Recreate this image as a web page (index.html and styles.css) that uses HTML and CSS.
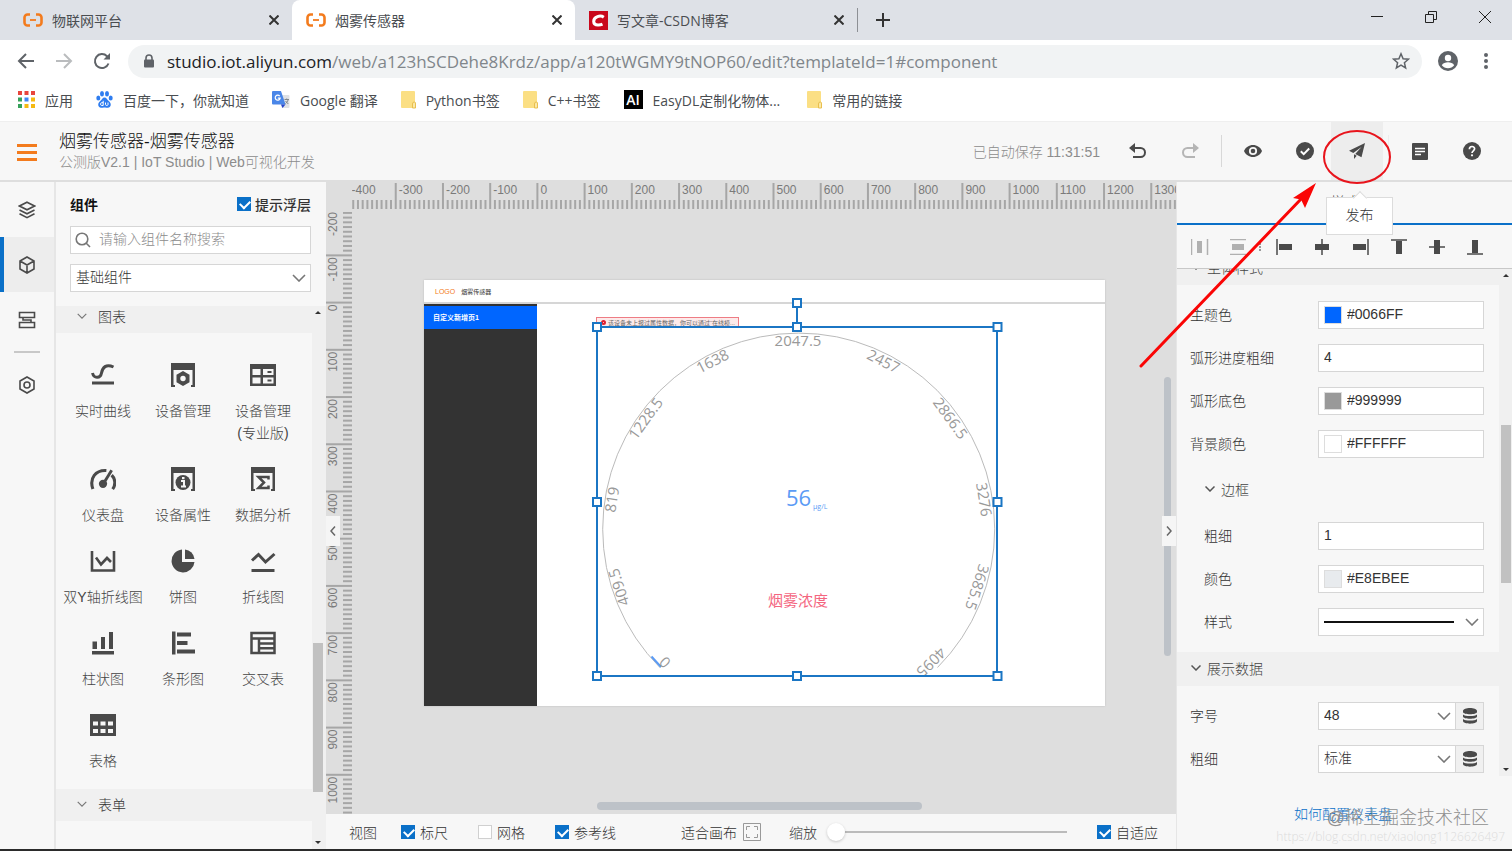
FILE: index.html
```
<!DOCTYPE html>
<html lang="zh-CN">
<head>
    <meta charset="UTF-8">
    <meta name="viewport" content="width=device-width, initial-scale=1.0">
    <title>烟雾传感器</title>
    <link rel="stylesheet" href="styles.css">
</head>
<body>
    <!-- Browser tabs -->
    <div class="tab-bar">
        <div class="tab">
            <svg class="favicon" viewBox="0 0 20 14"><path d="M7 1.5H4.5a3 3 0 0 0-3 3v5a3 3 0 0 0 3 3H7M13 1.5h2.5a3 3 0 0 1 3 3v5a3 3 0 0 1-3 3H13" fill="none" stroke="#f37b1d" stroke-width="2.6"/><path d="M7 7h6" stroke="#f37b1d" stroke-width="1.8"/></svg>
            <span>物联网平台</span>
            <button class="tab-close" aria-label="关闭"><svg viewBox="0 0 10 10"><path d="M.5.5l9 9M9.5.5l-9 9"/></svg></button>
        </div>
        <div class="tab active">
            <svg class="favicon" viewBox="0 0 20 14"><path d="M7 1.5H4.5a3 3 0 0 0-3 3v5a3 3 0 0 0 3 3H7M13 1.5h2.5a3 3 0 0 1 3 3v5a3 3 0 0 1-3 3H13" fill="none" stroke="#f37b1d" stroke-width="2.6"/><path d="M7 7h6" stroke="#f37b1d" stroke-width="1.8"/></svg>
            <span>烟雾传感器</span>
            <button class="tab-close" aria-label="关闭"><svg viewBox="0 0 10 10"><path d="M.5.5l9 9M9.5.5l-9 9"/></svg></button>
        </div>
        <div class="tab csdn">
            <svg class="favicon square" viewBox="0 0 19 19"><rect width="19" height="19" fill="#c9081c"/><path d="M14.8 6.2C13 5 10.500 4.900 8.500 5.600 6 6.500 4.600 8.400 4.700 10.600c.1 2.300 2 3.400 4.600 3.300 1.700 0 3.100-.3 4.200-.8" fill="none" stroke="#fff" stroke-width="3"/></svg>
            <span>写文章-CSDN博客</span>
            <button class="tab-close" aria-label="关闭"><svg viewBox="0 0 10 10"><path d="M.5.5l9 9M9.5.5l-9 9"/></svg></button>
        </div>
        <button class="new-tab" aria-label="新标签页"><svg viewBox="0 0 14 14"><path d="M7 0v14M0 7h14"/></svg></button>
        <div class="window-buttons">
            <button aria-label="最小化"><svg viewBox="0 0 14 14"><path d="M1 6.500h12"/></svg></button>
            <button aria-label="还原"><svg viewBox="0 0 14 14"><path d="M1.500 4.500h8v8h-8zM4.500 4.500v-3h8v8h-3"/></svg></button>
            <button aria-label="关闭"><svg viewBox="0 0 14 14"><path d="M1 1l12 12M13 1L1 13"/></svg></button>
        </div>
    </div>

    <!-- Address bar -->
    <div class="nav-bar">
        <button class="nav-btn" aria-label="后退"><svg viewBox="0 0 18 18"><path d="M17 9H2M9 2L2 9l7 7"/></svg></button>
        <button class="nav-btn disabled" aria-label="前进"><svg viewBox="0 0 18 18"><path d="M1 9h15M9 2l7 7-7 7"/></svg></button>
        <button class="nav-btn" aria-label="刷新"><svg viewBox="0 0 18 18"><path d="M15.500 11.500A7 7 0 1 1 14 4.200l2 2"/><path d="M17 1v6.500h-6.500z" fill="#5f6368" stroke="none"/></svg></button>
        <div class="address">
            <svg class="lock" viewBox="0 0 12 14"><path d="M3 6V4a3 3 0 0 1 6 0v2" fill="none" stroke="#5f6368" stroke-width="1.600"/><rect x="1" y="5.500" width="10" height="8" rx="1" fill="#5f6368"/></svg>
            <span class="url"><b>studio.iot.aliyun.com</b>/web/a123hSCDehe8Krdz/app/a120tWGMY9tNOP60/edit?templateId=1#component</span>
            <svg class="star" viewBox="0 0 18 18"><path d="M9 1.800l2.100 4.900 5.300.5-4 3.500 1.200 5.200L9 13.100l-4.600 2.800 1.200-5.200-4-3.500 5.300-.5z" fill="none" stroke="#5f6368" stroke-width="1.500"/></svg>
        </div>
        <svg class="avatar" viewBox="0 0 20 20"><circle cx="10" cy="10" r="10" fill="#5f6368"/><circle cx="10" cy="7" r="3.200" fill="#fff"/><path d="M3.800 14.200c1.200-2 3.700-2.900 6.200-2.900s5 .9 6.200 2.900c-1.500 2-3.700 3-6.200 3s-4.700-1-6.200-3z" fill="#fff"/></svg>
        <svg class="more" viewBox="0 0 4 16"><circle cx="2" cy="2" r="2"/><circle cx="2" cy="8" r="2"/><circle cx="2" cy="14" r="2"/></svg>
    </div>

    <!-- Bookmarks -->
    <div class="bookmarks">
        <a class="bookmark" href="#"><svg width="17" height="17" viewBox="0 0 17 17"><path d="M0 0h4v4H0zM6.500 0h4v4h-4zM13 0h4v4h-4z" fill="#e8453c"/><path d="M0 6.500h4v4H0z" fill="#36a15a"/><path d="M6.500 6.500h4v4h-4z" fill="#3f86f5"/><path d="M13 6.500h4v4h-4zM6.500 13h4v4h-4zM13 13h4v4h-4z" fill="#f5b912"/><path d="M0 13h4v4H0z" fill="#36a15a"/></svg>应用</a>
        <a class="bookmark" href="#"><svg width="17" height="17" viewBox="0 0 17 17" fill="#2f7df0"><ellipse cx="2.300" cy="7" rx="2" ry="2.600"/><ellipse cx="6" cy="2.800" rx="2" ry="2.700"/><ellipse cx="11" cy="2.800" rx="2" ry="2.700"/><ellipse cx="14.700" cy="7" rx="2" ry="2.600"/><path d="M8.500 6.500c2 0 2.500 2 4.500 3.700 3 2.500 1.800 6.300-1 6.600-1.500.2-2-.3-3.500-.3s-2 .5-3.500.3c-2.800-.3-4-4.100-1-6.600 2-1.700 2.500-3.700 4.500-3.700z"/><path d="M7.200 9.800v4.700H5.600c-1.400 0-1.400-2.800 0-2.800h1.600M9.500 11.500v2.200c0 1 2.500 1 2.500 0v-2.200" fill="none" stroke="#fff"/></svg>百度一下，你就知道</a>
        <a class="bookmark" href="#"><svg width="18" height="18" viewBox="0 0 18 18"><path d="M7 4h9.500q1 0 1 1v11q0 1-1 1H10z" fill="#dfe1e5"/><path d="M1 0h8l4.500 13.500H1q-1 0-1-1V1q0-1 1-1z" fill="#4a86e8"/><path d="M9 13.500h4.500L10.500 17z" fill="#2645c9"/><path d="M7.700 5.100a2.500 2.500 0 1 0 .5 2H5.800" fill="none" stroke="#fff" stroke-width="1.200"/><path d="M12.500 8.500H17M14.700 7.500v1M16.200 8.500c-.5 2-1.700 3.200-2.700 4M13.500 10l2.800 3" fill="none" stroke="#80868b"/></svg>Google 翻译</a>
        <a class="bookmark" href="#"><svg width="15" height="18" viewBox="0 0 15 18"><path d="M1 0h12q1 0 1 1v16H1q-1 0-1-1V1q0-1 1-1z" fill="#fbdf84"/><path d="M11.500 17v-4q0-2 1.700-2t1.300 2v4z" fill="#fbe9a9" stroke="#e9bf4e"/></svg>Python书签</a>
        <a class="bookmark" href="#"><svg width="15" height="18" viewBox="0 0 15 18"><path d="M1 0h12q1 0 1 1v16H1q-1 0-1-1V1q0-1 1-1z" fill="#fbdf84"/><path d="M11.500 17v-4q0-2 1.700-2t1.300 2v4z" fill="#fbe9a9" stroke="#e9bf4e"/></svg>C++书签</a>
        <a class="bookmark" href="#"><span class="ai-icon">AI</span>EasyDL定制化物体...</a>
        <a class="bookmark last" href="#"><svg width="15" height="18" viewBox="0 0 15 18"><path d="M1 0h12q1 0 1 1v16H1q-1 0-1-1V1q0-1 1-1z" fill="#fbdf84"/><path d="M11.500 17v-4q0-2 1.700-2t1.300 2v4z" fill="#fbe9a9" stroke="#e9bf4e"/></svg>常用的链接</a>
    </div>

    <!-- App header -->
    <header class="app-header">
        <button class="menu-btn" aria-label="菜单"><i></i><i></i><i></i></button>
        <div class="app-title">
            <h1>烟雾传感器-烟雾传感器</h1>
            <p>公测版V2.1 | IoT Studio | Web可视化开发</p>
        </div>
        <span class="saved">已自动保存 11:31:51</span>
        <div class="actions">
            <button aria-label="撤销"><svg width="18" height="16" viewBox="0 0 18 16"><path d="M3 5h8.500a4.500 4.500 0 0 1 0 9H4" fill="none" stroke="#4a4a4a" stroke-width="2"/><path d="M6 0v10L0 5z" fill="#4a4a4a"/></svg></button>
            <button aria-label="重做"><svg width="18" height="16" viewBox="0 0 18 16"><path d="M15 5H6.500a4.500 4.500 0 0 0 0 9H14" fill="none" stroke="#b5b5b5" stroke-width="2"/><path d="M12 0v10l6-5z" fill="#b5b5b5"/></svg></button>
            <span class="divider"></span>
            <button aria-label="预览"><svg width="18" height="12" viewBox="0 0 18 12"><path d="M9 0c4 0 7.500 2.500 9 6-1.500 3.500-5 6-9 6s-7.500-2.500-9-6c1.500-3.500 5-6 9-6z" fill="#4a4a4a"/><circle cx="9" cy="6" r="3.200" fill="#4a4a4a" stroke="#f7f7f7" stroke-width="1.800"/></svg></button>
            <button aria-label="检查"><svg width="18" height="18" viewBox="0 0 18 18"><circle cx="9" cy="9" r="9" fill="#4a4a4a"/><path d="M4.800 9.200l2.900 2.900 5.500-5.600" fill="none" stroke="#fff" stroke-width="2"/></svg></button>
            <button class="publish" aria-label="发布"><svg width="16" height="16" viewBox="0 0 16 16"><path d="M16 0L0 7.800l4.300 2.300L12.500 4 6.200 11l6.300 3.200zM5 11.300V16l2.700-3.300z" fill="#4a4a4a"/></svg></button>
            <span class="divider light"></span>
            <button aria-label="文档"><svg width="16" height="17" viewBox="0 0 16 17"><rect width="16" height="17" rx="1" fill="#4a4a4a"/><path d="M3 5.500h10M3 8.500h10M3 11.500h6" stroke="#fff" stroke-width="1.400"/></svg></button>
            <button aria-label="帮助"><svg width="18" height="18" viewBox="0 0 18 18"><circle cx="9" cy="9" r="9" fill="#4a4a4a"/><path d="M6.400 7.200c0-3.500 5.200-3.500 5.200-.4C11.600 8.800 9 8.800 9 11" fill="none" stroke="#fff" stroke-width="1.700"/><circle cx="9" cy="13.300" r="1.100" fill="#fff"/></svg></button>
        </div>
    </header>

    <main class="workspace">
        <!-- Icon rail -->
        <nav class="rail">
            <button aria-label="图层"><svg viewBox="0 0 18 18"><path d="M9 1.200l7.500 3.800L9 8.800 1.500 5z"/><path d="M1.500 9L9 12.800 16.500 9M1.500 12.800L9 16.600l7.500-3.800"/></svg></button>
            <button class="active" aria-label="组件"><svg viewBox="0 0 18 18"><path d="M9 1l7 4v8l-7 4-7-4V5zM2 5l7 4 7-4M9 9v8"/></svg></button>
            <button aria-label="页面"><svg viewBox="0 0 18 18"><path d="M1.500 1.500h15v5h-15zM1.500 11.500h15v5h-15zM5 6.500V9h8v2.500"/></svg></button>
            <hr>
            <button aria-label="设置"><svg viewBox="0 0 18 18"><path d="M9 1l7 4v8l-7 4-7-4V5z"/><circle cx="9" cy="9" r="3"/></svg></button>
        </nav>

        <!-- Component library -->
        <aside class="library">
            <div class="library-head">
                <h2>组件</h2>
                <label class="check bold"><input type="checkbox" checked>提示浮层</label>
            </div>
            <div class="search">
                <svg viewBox="0 0 16 16"><circle cx="7" cy="7" r="5.800"/><path d="M11 11l4 4"/></svg>
                <input type="text" placeholder="请输入组件名称搜索" aria-label="搜索组件">
            </div>
            <div class="select library-select">
                <select aria-label="组件分类"><option>基础组件</option></select>
                <svg viewBox="0 0 14 8"><path d="M1 1l6 6 6-6"/></svg>
            </div>
            <div class="library-body">
                <div class="library-list">
                    <h3 class="group"><svg viewBox="0 0 14 8"><path d="M1 1l6 6 6-6"/></svg>图表</h3>
                    <div class="components">
                        <div class="component"><svg viewBox="0 0 26 26"><path d="M2.500 11c1.500 6 8 5.500 9 0S16 1.500 23.500 5" fill="none" stroke="#4a4a4a" stroke-width="3"/><path d="M2 19.500h22v3H2z"/></svg>实时曲线</div>
                        <div class="component"><svg viewBox="0 0 26 26"><path d="M1 1h24v24h-4v-2h1.500V8h-19v15H5v2H1z"/><path d="M13 9l6.500 3.700v7.600L13 24l-6.500-3.700v-7.600z"/><circle cx="13" cy="16.500" r="2.700" fill="#f7f7f7"/></svg>设备管理</div>
                        <div class="component"><svg viewBox="0 0 26 26"><path d="M0 2h26v22H0z"/><path d="M2.500 7h8v6h-8zM2.500 15.500h8v6h-8zM13 7h10.500v6H13zM13 15.500h10.500v6H13z" fill="#f7f7f7"/><path d="M17.500 9h4v2h-4zM17.500 17.500h4v2h-4z"/></svg>设备管理<br>(专业版)</div>
                        <div class="component"><svg viewBox="0 0 27 26"><path d="M3 23.500C-1 12 6 3.500 17 4.200M22.500 9a11 11 0 0 1 1 14.500" fill="none" stroke="#4a4a4a" stroke-width="3.200"/><circle cx="13.500" cy="18" r="4.300"/><path d="M14.500 17L22.500 4" stroke="#4a4a4a" stroke-width="3"/></svg>仪表盘</div>
                        <div class="component"><svg viewBox="0 0 26 26"><path d="M1 1h24v24h-4v-2h1.500V7h-19v16H5v2H1z"/><circle cx="13" cy="16.500" r="7.500"/><path d="M11 15h3v5.500M11 20.500h5" fill="none" stroke="#f7f7f7" stroke-width="2"/><path d="M12 11h2.500v2.200H12z" fill="#f7f7f7"/></svg>设备属性</div>
                        <div class="component"><svg viewBox="0 0 26 26"><path d="M1 1h24v24h-4v-2h1.500V7h-19v16H5v2H1z"/><path d="M18.500 13.500V11H8.500l5.500 5.500L8.500 22h10v-2.500" fill="none" stroke="#4a4a4a" stroke-width="2.500"/></svg>数据分析</div>
                        <div class="component"><svg viewBox="0 0 26 26"><path d="M2 3v19.500h22V3M6 9.500l5 7 6-6.500 4 4" fill="none" stroke="#4a4a4a" stroke-width="2.600"/></svg>双Y轴折线图</div>
                        <div class="component"><svg viewBox="0 0 26 26"><path d="M12 1.500A11.500 11.500 0 1 0 24.500 14H12z"/><path d="M15 1.500A10.500 10.500 0 0 1 24.500 11H15z"/></svg>饼图</div>
                        <div class="component"><svg viewBox="0 0 26 26"><path d="M2 12.500l6.500-6 7 7.500 9-8" fill="none" stroke="#4a4a4a" stroke-width="3"/><path d="M1.500 21h23v3h-23z"/></svg>折线图</div>
                        <div class="component"><svg viewBox="0 0 26 26"><path d="M2 21h22v3.500H2zM2.500 11.500H7V19H2.500zM11 7h4v12h-4zM19 2h4v17h-4z"/></svg>柱状图</div>
                        <div class="component"><svg viewBox="0 0 26 26"><path d="M2 1.500h3.500v23H2zM7 2.500h14v4H7zM7 11h10.500v4H7zM7 19.500h18v4H7z"/></svg>条形图</div>
                        <div class="component"><svg viewBox="0 0 26 26"><path d="M1.500 3h23v20h-23zM1.500 8.500h23M9 8.500V23M9 13.500h15.500M9 18.300h15.500" fill="none" stroke="#4a4a4a" stroke-width="2.500"/></svg>交叉表</div>
                        <div class="component"><svg viewBox="0 0 26 26"><path d="M0 2h26v22H0z"/><path d="M3 9.500h5v4H3zM10.500 9.500h5v4h-5zM18 9.500h5v4h-5zM3 17h5v4H3zM10.500 17h5v4h-5zM18 17h5v4h-5z" fill="#f7f7f7"/></svg>表格</div>
                    </div>
                    <h3 class="group"><svg viewBox="0 0 14 8"><path d="M1 1l6 6 6-6"/></svg>表单</h3>
                </div>
                <div class="scrollbar library-scroll"><i class="up"></i><b></b><i class="down"></i></div>
            </div>
        </aside>

        <!-- Editing area -->
        <section class="editor">
            <div class="canvas">
                <svg class="ruler-x" id="rulerX"></svg>
                <svg class="ruler-y" id="rulerY"></svg>
                <div class="page">
                    <div class="page-head"><b>LOGO</b>烟雾传感器</div>
                    <div class="page-body">
                        <div class="page-side"><div class="page-item">自定义新增页1</div></div>
                    </div>
                </div>
                <div class="error-tip"><i></i>该设备未上报过属性数据，你可以通过“在线模...</div>
                <div class="selection">
                    <svg class="gauge" viewBox="0 0 402 350">
                        <path d="M64.200 340.800A196 196 0 1 1 341.500 340.500" fill="none" stroke="#bbb"/>
                        <path d="M55.500 329.500L65 340" stroke="#5b9bf5" stroke-width="2"/>
                        <g class="gauge-labels">
                            <text transform="rotate(-135 202 202)" x="202" y="19">0</text>
                            <text transform="rotate(-108 202 202)" x="202" y="19">409.5</text>
                            <text transform="rotate(-81 202 202)" x="202" y="19">819</text>
                            <text transform="rotate(-54 202 202)" x="202" y="19">1228.5</text>
                            <text transform="rotate(-27 202 202)" x="202" y="19">1638</text>
                            <text x="202" y="19">2047.5</text>
                            <text transform="rotate(27 202 202)" x="202" y="19">2457</text>
                            <text transform="rotate(54 202 202)" x="202" y="19">2866.5</text>
                            <text transform="rotate(81 202 202)" x="202" y="19">3276</text>
                            <text transform="rotate(108 202 202)" x="202" y="19">3685.5</text>
                            <text transform="rotate(135 202 202)" x="202" y="19">4095</text>
                        </g>
                        <text class="gauge-value" x="190" y="179">56</text>
                        <text class="gauge-unit" x="217" y="182">μg/L</text>
                        <text class="gauge-name" x="202" y="279">烟雾浓度</text>
                    </svg>
                    <svg class="handles" viewBox="-6 -30 414 386">
                        <path d="M1 0h400v349H1zM201 0v-24" fill="none"/>
                        <path d="M-3-4h8v8h-8zM197-4h8v8h-8zM397.500-4h8v8h-8zM-3 171h8v8h-8zM397.500 171h8v8h-8zM-3 345h8v8h-8zM197 345h8v8h-8zM397.500 345h8v8h-8zM197-28h8v8h-8z" fill="#fff"/>
                    </svg>
                </div>
                <i class="canvas-scroll horizontal"></i>
                <i class="canvas-scroll vertical"></i>
                <button class="collapse left" aria-label="收起左侧"><svg viewBox="0 0 6 10"><path d="M5 .5L1 5l4 4.500"/></svg></button>
                <button class="collapse right" aria-label="收起右侧"><svg viewBox="0 0 6 10"><path d="M1 .5L5 5 1 9.500"/></svg></button>
            </div>
            <div class="view-bar">
                <span>视图</span>
                <label class="check"><input type="checkbox" checked>标尺</label>
                <label class="check"><input type="checkbox">网格</label>
                <label class="check"><input type="checkbox" checked>参考线</label>
                <button class="fit">适合画布<svg viewBox="0 0 18 18"><path d="M.5.500h17v17H.500z"/><path d="M3.500 7V3.500H7M11 3.500h3.500V7M14.500 11v3.500H11M7 14.500H3.500V11"/></svg></button>
                <label class="zoom">缩放<input type="range" min="0" max="100" value="0"></label>
                <label class="check adaptive"><input type="checkbox" checked>自适应</label>
            </div>
        </section>

        <!-- Properties -->
        <aside class="props">
            <div class="props-tab">样式</div>
            <div class="align-bar">
                <button class="dim" aria-label="水平分布"><svg viewBox="0 0 18 16"><path d="M.5 0v16M16.500 0v16"/><path d="M6 2h5v12H6z" fill="currentColor" stroke="none"/></svg></button>
                <button class="dim" aria-label="垂直分布"><svg viewBox="0 0 18 16"><path d="M1 .5h16M1 15.500h16"/><path d="M3 5h12v6H3z" fill="currentColor" stroke="none"/></svg></button>
                <button class="first" aria-label="左对齐"><svg viewBox="0 0 18 16"><path d="M2 0v16"/><path d="M4 5h13v6H4z" fill="currentColor" stroke="none"/></svg></button>
                <button aria-label="水平居中"><svg viewBox="0 0 18 16"><path d="M9 0v16"/><path d="M2 5h14v6H2z" fill="currentColor" stroke="none"/></svg></button>
                <button aria-label="右对齐"><svg viewBox="0 0 18 16"><path d="M16 0v16"/><path d="M1 5h13v6H1z" fill="currentColor" stroke="none"/></svg></button>
                <button aria-label="顶对齐"><svg viewBox="0 0 18 16"><path d="M1 1h16"/><path d="M6 2h6v13H6z" fill="currentColor" stroke="none"/></svg></button>
                <button aria-label="垂直居中"><svg viewBox="0 0 18 16"><path d="M1 8h16"/><path d="M6 1h6v14H6z" fill="currentColor" stroke="none"/></svg></button>
                <button aria-label="底对齐"><svg viewBox="0 0 18 16"><path d="M1 15h16"/><path d="M6 1h6v13H6z" fill="currentColor" stroke="none"/></svg></button>
            </div>
            <div class="props-body">
                <div class="props-list">
                    <h3 class="section"><svg viewBox="0 0 10 6"><path d="M.5.500L5 5 9.500.500"/></svg>主体样式</h3>
                    <div class="rows">
                        <div class="row"><label for="theme">主题色</label><div class="field"><input type="color" value="#0066ff" aria-label="主题色取色"><input type="text" id="theme" value="#0066FF"></div></div>
                        <div class="row"><label for="arcWidth">弧形进度粗细</label><div class="field"><input type="text" id="arcWidth" value="4"></div></div>
                        <div class="row"><label for="arcColor">弧形底色</label><div class="field"><input type="color" value="#999999" aria-label="弧形底色取色"><input type="text" id="arcColor" value="#999999"></div></div>
                        <div class="row"><label for="bgColor">背景颜色</label><div class="field"><input type="color" value="#ffffff" aria-label="背景颜色取色"><input type="text" id="bgColor" value="#FFFFFF"></div></div>
                        <h4 class="sub-section"><svg viewBox="0 0 10 6"><path d="M.5.500L5 5 9.500.500"/></svg>边框</h4>
                        <div class="row sub"><label for="borderWidth">粗细</label><div class="field"><input type="text" id="borderWidth" value="1"></div></div>
                        <div class="row sub"><label for="borderColor">颜色</label><div class="field"><input type="color" value="#e8ebee" aria-label="边框取色"><input type="text" id="borderColor" value="#E8EBEE"></div></div>
                        <div class="row sub"><label for="borderStyle">样式</label><div class="select line"><select id="borderStyle"><option label=" " value="solid"></option></select><svg viewBox="0 0 14 8"><path d="M1 1l6 6 6-6"/></svg></div></div>
                    </div>
                    <h3 class="section"><svg viewBox="0 0 10 6"><path d="M.5.500L5 5 9.500.500"/></svg>展示数据</h3>
                    <div class="rows">
                        <div class="row"><label for="fontSize">字号</label><div class="bound"><div class="select"><select id="fontSize"><option>48</option></select><svg viewBox="0 0 14 8"><path d="M1 1l6 6 6-6"/></svg></div><button aria-label="数据源"><svg viewBox="0 0 14 16"><path d="M0 3c0-4 14-4 14 0v1c0 3-14 3-14 0zM0 6.500c2 2 12 2 14 0v2c0 3-14 3-14 0zM0 11c2 2 12 2 14 0v2c0 3.500-14 3.500-14 0z"/></svg></button></div></div>
                        <div class="row"><label for="fontWeight">粗细</label><div class="bound"><div class="select"><select id="fontWeight"><option>标准</option></select><svg viewBox="0 0 14 8"><path d="M1 1l6 6 6-6"/></svg></div><button aria-label="数据源"><svg viewBox="0 0 14 16"><path d="M0 3c0-4 14-4 14 0v1c0 3-14 3-14 0zM0 6.500c2 2 12 2 14 0v2c0 3-14 3-14 0zM0 11c2 2 12 2 14 0v2c0 3.500-14 3.500-14 0z"/></svg></button></div></div>
                    </div>
                </div>
                <div class="scrollbar props-scroll"><i class="up"></i><b></b><i class="down"></i></div>
            </div>
            <div class="props-foot"><a href="#">如何配置仪表盘</a></div>
        </aside>
    </main>

    <div class="tooltip">发布</div>

    <!-- Red marker and arrow -->
    <svg class="marker" viewBox="0 0 260 250">
        <ellipse cx="225" cy="37" rx="33" ry="26" fill="none" stroke="#e8141c" stroke-width="2"/>
        <path d="M9 246L170 78" stroke="#fa0505" stroke-width="3" stroke-linecap="round"/>
        <path d="M184 63L161 78l8 1.500L173 88z" fill="#fa0505"/>
    </svg>

    <div class="watermark">@稀土掘金技术社区</div>
    <div class="watermark-url">https://blog.csdn.net/xiaolong1126626497</div>

    <script src="script.js"></script>
</body>
</html>
```

FILE: styles.css
```
* {
    box-sizing: border-box;
}

body {
    margin: 0;
    height: 100vh;
    display: flex;
    flex-direction: column;
    overflow: hidden;
    position: relative;
    background: #f7f7f7;
    border-bottom: 2px solid #2b2b2b;
    font-family: "Liberation Sans", "Noto Sans CJK SC", sans-serif;
    font-size: 14px;
    font-weight: 300;
    color: #333;
}

button {
    display: flex;
    align-items: center;
    justify-content: center;
    padding: 0;
    border: 0;
    background: none;
    font: inherit;
    color: inherit;
}

input, select {
    font: inherit;
    color: inherit;
}

h1, h2, h3, h4, p {
    margin: 0;
    font-size: 14px;
    font-weight: 300;
}

svg {
    flex: none;
}

/* Browser */
.tab-bar, .nav-bar, .bookmarks {
    display: flex;
    align-items: center;
    flex: none;
    font-family: "Open Sans", "Noto Sans CJK SC", sans-serif;
    font-weight: 400;
    color: #4a4d51;
}

.tab-bar {
    height: 40px;
    background: #dee1e7;
}

.tab {
    display: flex;
    align-items: center;
    gap: 9px;
    width: 283px;
    height: 40px;
    padding: 0 13px 0 14px;
}

.tab:first-child {
    width: 292px;
    padding-left: 23px;
}

.tab.active {
    background: #fff;
    border-radius: 8px 8px 0 0;
}

.tab.csdn {
    border-right: 1px solid #8d9095;
    height: 24px;
}

.favicon {
    width: 20px;
    height: 14px;
}

.favicon.square {
    width: 19px;
    height: 19px;
}

.tab-close {
    width: 10px;
    height: 10px;
    margin-left: auto;
}

.tab-close svg, .new-tab svg {
    width: 100%;
    height: 100%;
    stroke: #333;
    stroke-width: 2;
}

.new-tab {
    width: 14px;
    height: 14px;
    margin-left: 18px;
}

.window-buttons {
    display: flex;
    gap: 40px;
    margin: 0 20px 6px auto;
}

.window-buttons svg {
    width: 14px;
    height: 14px;
    fill: none;
    stroke: #222;
}

.nav-bar {
    height: 42px;
    padding: 0 24px 0 17px;
    background: #fff;
}

.nav-btn {
    width: 18px;
    height: 18px;
    margin-right: 20px;
}

.nav-btn svg {
    width: 18px;
    height: 18px;
    fill: none;
    stroke: #5f6368;
    stroke-width: 2;
}

.nav-btn.disabled svg {
    stroke: #babcbe;
}

.address {
    display: flex;
    align-items: center;
    flex: 1;
    height: 33px;
    margin-left: -3px;
    margin-right: 16px;
    padding: 0 12px 0 15px;
    border-radius: 17px;
    background: #f1f3f4;
    font-size: 17px;
    color: #80868b;
}

.address b {
    font-weight: 400;
    color: #202124;
}

.lock {
    width: 12px;
    height: 14px;
    margin-right: 12px;
}

.star {
    width: 18px;
    height: 18px;
    margin-left: auto;
}

.avatar {
    width: 20px;
    height: 20px;
    margin-right: 26px;
}

.more {
    width: 4px;
    height: 16px;
    fill: #5f6368;
}

.bookmarks {
    height: 39px;
    gap: 23px;
    padding: 0 18px 4px;
    background: #fff;
}

.bookmark {
    display: flex;
    align-items: center;
    gap: 10px;
    color: inherit;
    text-decoration: none;
    white-space: nowrap;
}

.bookmark.last {
    margin-left: 4px;
}

.ai-icon {
    width: 19px;
    height: 19px;
    background: #000;
    color: #fff;
    line-height: 19px;
    text-align: center;
    font-weight: 600;
}

/* App header */
.app-header {
    display: flex;
    align-items: center;
    flex: none;
    height: 61px;
    padding: 0 14px 0 17px;
    border-top: 1px solid #efefef;
    border-bottom: 2px solid #dedede;
    background: #f7f7f7;
}

.menu-btn {
    flex-direction: column;
    gap: 4px;
    width: 20px;
    margin-right: 22px;
    padding-top: 3px;
}

.menu-btn i {
    width: 20px;
    height: 3px;
    background: #f37b1d;
}

.app-title {
    padding-top: 2px;
}

.app-title h1 {
    font-size: 17px;
    line-height: 20px;
    color: #111;
}

.app-title p {
    line-height: 20px;
    color: #8c8c8c;
}

.saved {
    margin-left: auto;
    margin-right: 12px;
    color: #8c8c8c;
}

.actions {
    display: flex;
    align-items: center;
    height: 100%;
}

.actions button {
    width: 52px;
    height: 100%;
}

.actions .publish {
    background: #ededed;
}

.divider {
    width: 1px;
    height: 32px;
    margin: 0 5px;
    background: #d8d8d8;
}

.divider.light {
    background: #ededed;
}

/* Workspace */
.workspace {
    display: flex;
    flex: 1;
    min-height: 0;
}

.rail {
    flex: none;
    width: 56px;
    border-right: 2px solid #e6e6e6;
}

.rail button {
    width: 54px;
    height: 55px;
}

.rail button.active {
    border-left: 4px solid #0a70c8;
    padding-right: 4px;
    background: #ededed;
}

.rail svg {
    width: 18px;
    height: 18px;
    fill: none;
    stroke: #4a4a4a;
    stroke-width: 1.6px;
}

.rail hr {
    width: 26px;
    height: 2px;
    margin: 4px 14px;
    border: 0;
    background: #c8c8c8;
}

.library {
    display: flex;
    flex-direction: column;
    flex: none;
    width: 270px;
}

.library-head {
    display: flex;
    align-items: center;
    justify-content: space-between;
    height: 44px;
    padding: 0 15px 0 14px;
}

.library-head h2 {
    font-weight: 700;
    color: #111;
}

.check {
    display: flex;
    align-items: center;
    gap: 5px;
}

.check.bold {
    gap: 4px;
    font-weight: 500;
}

.check input {
    appearance: none;
    position: relative;
    width: 14px;
    height: 14px;
    margin: 0;
    border: 1px solid #d0d0d0;
    background: #fff;
}

.check input:checked {
    border-color: #0a70c8;
    background: #0a70c8;
}

.check input:checked::after {
    content: "";
    position: absolute;
    left: 2px;
    top: 2px;
    width: 8px;
    height: 5px;
    border: solid #fff;
    border-width: 0 0 2px 2px;
    transform: rotate(-45deg);
}

.search {
    display: flex;
    align-items: center;
    gap: 8px;
    height: 28px;
    margin: 0 15px 10px 14px;
    padding: 0 4px;
    border: 1px solid #d6d6d6;
    background: #fff;
}

.search svg {
    width: 16px;
    height: 16px;
    fill: none;
    stroke: #777;
    stroke-width: 1.6px;
}

.search input {
    flex: 1;
    min-width: 0;
    padding: 0 0 2px;
    border: 0;
    background: none;
}

.search input::placeholder {
    color: #8c8c8c;
}

.select {
    position: relative;
    flex: 1;
    height: 28px;
}

.select select {
    appearance: none;
    width: 100%;
    height: 100%;
    padding: 0 5px 2px;
    border: 1px solid #d6d6d6;
    border-radius: 0;
    background: #fff;
}

.select svg {
    position: absolute;
    right: 5px;
    top: 10px;
    width: 14px;
    height: 8px;
    pointer-events: none;
    fill: none;
    stroke: #777;
    stroke-width: 1.6px;
}

.library-select {
    flex: none;
    margin: 0 15px 14px 14px;
}

.library-body {
    display: flex;
    flex: 1;
    min-height: 0;
}

.library-list {
    flex: 1;
    overflow: hidden;
}

.group {
    display: flex;
    align-items: center;
    gap: 11px;
    height: 32px;
    padding: 0 0 2px 21px;
    background: #f0f0f0;
}

.group:first-child {
    margin-top: -5px;
}

.group svg {
    width: 10px;
    height: 6px;
    fill: none;
    stroke: #777;
    stroke-width: 1.6px;
}

.components {
    display: grid;
    grid-template-columns: repeat(3, 1fr);
    row-gap: 22px;
    padding: 29px 9px 17px 7px;
}

.component {
    line-height: 22px;
    text-align: center;
    white-space: nowrap;
    color: #444;
}

.component svg {
    display: block;
    width: 26px;
    height: 26px;
    margin: 0 auto 12px;
    fill: #4a4a4a;
}

.scrollbar {
    display: flex;
    flex-direction: column;
    align-items: center;
    flex: none;
    width: 13px;
    padding: 5px 0;
    background: #f0f0f0;
}

.scrollbar i {
    border: 3px solid transparent;
}

.scrollbar .up {
    border-top: 0;
    border-bottom-color: #333;
}

.scrollbar .down {
    margin-top: auto;
    border-bottom: 0;
    border-top-color: #333;
}

.scrollbar b {
    width: 10px;
    background: #c1c1c1;
}

.library-scroll {
    width: 14px;
    padding-right: 2px;
}

.library-scroll b {
    height: 149px;
    margin-top: 329px;
}

.props-scroll b {
    height: 158px;
    margin-top: 148px;
}

/* Editor */
.editor {
    display: flex;
    flex-direction: column;
    flex: 1;
    min-width: 0;
}

.canvas {
    position: relative;
    flex: 1;
    overflow: hidden;
    background: #dedede;
}

.ruler-x, .ruler-y {
    position: absolute;
    font-size: 12px;
    font-weight: 400;
    fill: #7a7a7a;
    stroke-width: 2px;
}

.ruler-x line, .ruler-y line {
    stroke: #a6a6a6;
}

.ruler-x {
    left: 26px;
    top: 0;
    width: calc(100% - 26px);
    height: 27px;
}

.ruler-y {
    left: 0;
    top: 30px;
    width: 26px;
    height: calc(100% - 30px);
}

.page {
    position: absolute;
    left: 98px;
    top: 98px;
    width: 681px;
    height: 426px;
    display: flex;
    flex-direction: column;
    background: #fff;
    box-shadow: 0 0 2px rgba(0, 0, 0, 0.15);
}

.page-head {
    display: flex;
    align-items: center;
    gap: 6px;
    height: 24px;
    padding-left: 11px;
    border-bottom: 2px solid #d6d6d6;
    font-size: 6px;
    font-weight: 400;
}

.page-head b {
    font-size: 7px;
    font-weight: 400;
    color: #f37b1d;
}

.page-body {
    flex: 1;
}

.page-side {
    width: 113px;
    height: 100%;
    padding-top: 2px;
    background: #333;
}

.page-item {
    height: 23px;
    padding-left: 9px;
    background: #06f;
    color: #fff;
    font-size: 7px;
    font-weight: 700;
    line-height: 23px;
}

.error-tip {
    position: absolute;
    left: 270px;
    top: 135px;
    display: flex;
    align-items: center;
    gap: 2px;
    width: 143px;
    height: 11px;
    padding-left: 4px;
    border: 1px solid #ee7c84;
    background: #fdeaea;
    font-size: 6px;
    font-weight: 400;
    white-space: nowrap;
    color: #666;
}

.error-tip i {
    width: 5px;
    height: 5px;
    border: 2px solid #e02030;
    border-radius: 50%;
}

.selection {
    position: absolute;
    left: 270px;
    top: 145px;
    width: 402px;
    height: 350px;
}

.gauge {
    position: absolute;
    inset: 0;
    overflow: visible;
    font-family: "Open Sans", "Noto Sans CJK SC", sans-serif;
    font-weight: 400;
}

.gauge-labels text {
    font-size: 15px;
    text-anchor: middle;
    fill: #999;
}

.gauge-value {
    font-size: 22px;
    fill: #5b9bf5;
}

.gauge-unit {
    font-size: 7px;
    fill: #5b9bf5;
}

.gauge-name {
    font-size: 15px;
    text-anchor: middle;
    fill: #f4667f;
}

.handles {
    position: absolute;
    left: -6px;
    top: -30px;
    width: 414px;
    height: 386px;
    stroke: #1b76c4;
    stroke-width: 2px;
}

.canvas-scroll {
    position: absolute;
    border-radius: 4px;
    background: #bdc2c8;
}

.canvas-scroll.horizontal {
    left: 271px;
    bottom: 4px;
    width: 325px;
    height: 8px;
}

.canvas-scroll.vertical {
    right: 5px;
    top: 195px;
    width: 7px;
    height: 279px;
}

.collapse {
    position: absolute;
    top: 334px;
    width: 14px;
    height: 30px;
    background: #f5f5f5;
}

.collapse.left {
    left: 0;
}

.collapse.right {
    right: 0;
}

.collapse svg {
    width: 6px;
    height: 10px;
    fill: none;
    stroke: #666;
    stroke-width: 1.5px;
}

.view-bar {
    display: flex;
    align-items: center;
    flex: none;
    height: 35px;
    padding: 0 18px 0 23px;
}

.view-bar .check {
    margin-left: 30px;
}

.view-bar span + .check {
    margin-left: 24px;
}

.fit {
    gap: 6px;
    margin-left: 65px;
}

.fit svg {
    width: 18px;
    height: 18px;
    fill: none;
    stroke: #999;
}

.zoom {
    display: flex;
    align-items: center;
    gap: 10px;
    flex: 1;
    margin-left: 28px;
}

.zoom input {
    appearance: none;
    flex: 1;
    min-width: 0;
    height: 18px;
    margin: 0;
    background: linear-gradient(#bbb, #bbb) center / 100% 2px no-repeat;
}

.zoom input::-webkit-slider-thumb {
    appearance: none;
    width: 18px;
    height: 18px;
    border-radius: 50%;
    background: #fff;
    box-shadow: 0 1px 3px rgba(0, 0, 0, 0.2);
}

/* Properties */
.props {
    display: flex;
    flex-direction: column;
    flex: none;
    width: 336px;
    border-left: 1px solid #e6e6e6;
}

.props-tab {
    height: 43px;
    border-bottom: 2px solid #0a70c8;
    line-height: 40px;
    text-align: center;
}

.align-bar {
    display: flex;
    align-items: center;
    height: 44px;
    padding: 0 28px 0 14px;
    border-bottom: 1px solid #c8c8c8;
    justify-content: space-between;
}

.align-bar button {
    color: #4a4a4a;
}

.align-bar .dim {
    color: #b0b0b0;
}

.align-bar .first {
    margin-left: 8px;
    position: relative;
}

.align-bar .first::before {
    content: "";
    position: absolute;
    left: -16px;
    height: 8px;
    border-left: 2px dotted #999;
}

.align-bar svg {
    width: 18px;
    height: 16px;
    fill: none;
    stroke: currentColor;
    stroke-width: 1.5px;
}

.props-body {
    display: flex;
    flex: 1;
    min-height: 0;
}

.props-list {
    flex: 1;
    overflow: hidden;
}

.section, .sub-section {
    display: flex;
    align-items: center;
    gap: 6px;
    height: 34px;
    padding: 0 0 2px 14px;
    color: #444;
}

.section {
    background: #f0f0f0;
}

.section:first-child {
    margin-top: -18px;
}

.sub-section {
    height: 33px;
    padding-left: 15px;
}

.section svg, .sub-section svg {
    width: 10px;
    height: 6px;
    fill: none;
    stroke: #555;
    stroke-width: 1.5px;
}

.rows {
    display: flex;
    flex-direction: column;
    gap: 16px;
    padding: 16px 15px 17px 13px;
}

.row {
    display: flex;
    align-items: center;
    height: 27px;
}

.row label {
    flex: none;
    width: 128px;
    padding-bottom: 2px;
}

.row.sub label {
    padding-left: 14px;
}

.field {
    display: flex;
    align-items: center;
    flex: 1;
    min-width: 0;
    gap: 5px;
    height: 28px;
    padding: 0 5px;
    border: 1px solid #d6d6d6;
    background: #fff;
}

.field input[type="text"] {
    flex: 1;
    min-width: 0;
    padding: 0 0 2px;
    border: 0;
    background: none;
}

.field input[type="color"] {
    appearance: none;
    flex: none;
    width: 18px;
    height: 18px;
    padding: 0;
    border: 1px solid #ddd;
    background: none;
}

.field input::-webkit-color-swatch-wrapper {
    padding: 0;
}

.field input::-webkit-color-swatch {
    border: 0;
}

.select.line select {
    background: linear-gradient(#111, #111) 5px center / 130px 2px no-repeat #fff;
}

.bound {
    display: flex;
    flex: 1;
}

.bound button {
    width: 28px;
    height: 28px;
    border: 1px solid #d6d6d6;
    border-left: 0;
    background: #f0f0f0;
}

.bound button svg {
    width: 14px;
    height: 16px;
    fill: #4a4a4a;
}

.props-foot {
    height: 73px;
    padding: 27px 0 0 117px;
}

.props-foot a {
    color: #0a70c8;
    text-decoration: none;
}

/* Overlays */
.tooltip {
    position: absolute;
    right: 119px;
    top: 197px;
    width: 67px;
    height: 38px;
    border: 1px solid #dcdcdc;
    background: #fff;
    line-height: 35px;
    text-align: center;
}

.tooltip::before {
    content: "";
    position: absolute;
    left: 28px;
    top: -5px;
    width: 9px;
    height: 9px;
    border: solid #dcdcdc;
    border-width: 1px 0 0 1px;
    background: #fff;
    transform: rotate(45deg);
}

.marker {
    position: absolute;
    right: 120px;
    top: 120px;
    width: 260px;
    height: 250px;
    pointer-events: none;
}

.watermark, .watermark-url {
    position: absolute;
    pointer-events: none;
    white-space: nowrap;
}

.watermark {
    right: 23px;
    bottom: 20px;
    font-size: 18px;
    color: #8f8f8f;
}

.watermark-url {
    right: 7px;
    bottom: 4px;
    font-family: "Open Sans", sans-serif;
    font-size: 12px;
    color: #dcdcdc;
}
```

FILE: script.js
```
const SVG_NS = 'http://www.w3.org/2000/svg';
const SCALE = 0.4722;

function addLine(svg, x1, y1, x2, y2) {
    const line = document.createElementNS(SVG_NS, 'line');
    line.setAttribute('x1', x1);
    line.setAttribute('y1', y1);
    line.setAttribute('x2', x2);
    line.setAttribute('y2', y2);
    svg.appendChild(line);
}

function addLabel(svg, value, x, y, rotated) {
    const text = document.createElementNS(SVG_NS, 'text');
    text.textContent = value;
    if (rotated) {
        text.setAttribute('transform', `translate(${x} ${y}) rotate(-90)`);
        text.setAttribute('text-anchor', 'end');
    } else {
        text.setAttribute('x', x);
        text.setAttribute('y', y);
    }
    svg.appendChild(text);
}

// Horizontal ruler
function drawRulerX() {
    const svg = document.getElementById('rulerX');
    for (let value = -400; value <= 1350; value += 10) {
        const x = 185.4 + value * SCALE;
        const major = value % 100 === 0;
        if (x > 0) addLine(svg, x, major ? 1 : 18, x, 27);
        if (major) addLabel(svg, value, x + 3, 12, false);
    }
}

// Vertical ruler
function drawRulerY() {
    const svg = document.getElementById('rulerY');
    for (let value = -200; value <= 1080; value += 10) {
        const y = 90.6 + value * SCALE;
        const major = value % 100 === 0;
        if (y > 0) addLine(svg, major ? 0 : 17, y, 26, y);
        if (major && value <= 1000) addLabel(svg, value, 11, Math.max(y + 2, 0), true);
    }
}

drawRulerX();
drawRulerY();
```
